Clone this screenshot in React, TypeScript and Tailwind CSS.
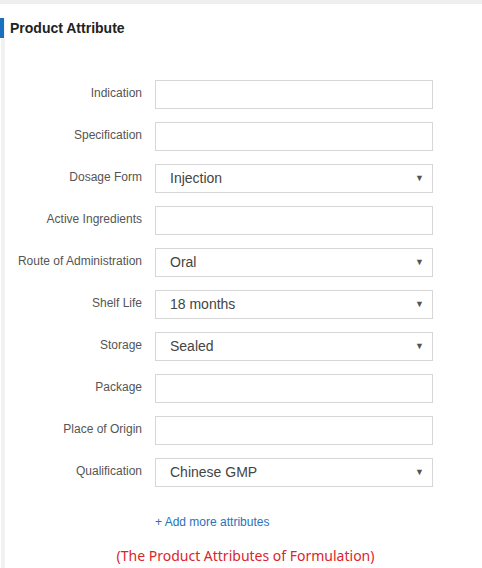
import React from "react";

type Row = { label: string; value?: string; select?: boolean };

const rows: Row[] = [
  { label: "Indication" },
  { label: "Specification" },
  { label: "Dosage Form", value: "Injection", select: true },
  { label: "Active Ingredients" },
  { label: "Route of Administration", value: "Oral", select: true },
  { label: "Shelf Life", value: "18 months", select: true },
  { label: "Storage", value: "Sealed", select: true },
  { label: "Package" },
  { label: "Place of Origin" },
  { label: "Qualification", value: "Chinese GMP", select: true },
];

export default function App() {
  return (
    <div
      className="w-[482px] h-[568px] bg-white overflow-hidden"
      style={{ fontFamily: '"Liberation Sans", Arial, sans-serif' }}
    >
      <div className="h-[4px] bg-[#efefef]" />
      <div className="ml-[1px] border-l-4 border-[#f1f1f1] h-[564px]">
        <div className="flex items-center h-[20px] mt-[14px] -ml-[5px]">
          <div className="w-[4px] h-[20px] bg-[#1a6fbf]" />
          <div className="ml-[6px] text-[14px] font-bold text-[#222]">Product Attribute</div>
        </div>
        <div className="mt-[42px] flex flex-col gap-[13px]">
          {rows.map((r) => (
            <div key={r.label} className="flex items-start h-[29px]">
              <div className="w-[137px] text-right text-[12px] text-[#555] pt-[5px] leading-[16px]">
                {r.label}
              </div>
              <div className="ml-[13px] w-[278px] h-[29px] border border-[#d6d6d6] flex items-center pl-[14px] pr-[8px] text-[14px] text-[#444]">
                <span className="flex-1">{r.value ?? ""}</span>
                {r.select && <span className="text-[9px] text-[#555]">▼</span>}
              </div>
            </div>
          ))}
        </div>
        <div className="mt-[26px] ml-[150px] text-[12px] text-[#2a72b8]">+ Add more attributes</div>
        <div
          className="mt-[14px] text-center text-[14px] text-[#d9262c] pl-[4px]"
          style={{ fontFamily: '"Noto Sans", "Liberation Sans", sans-serif' }}
        >
          (The Product Attributes of Formulation)
        </div>
      </div>
    </div>
  );
}
